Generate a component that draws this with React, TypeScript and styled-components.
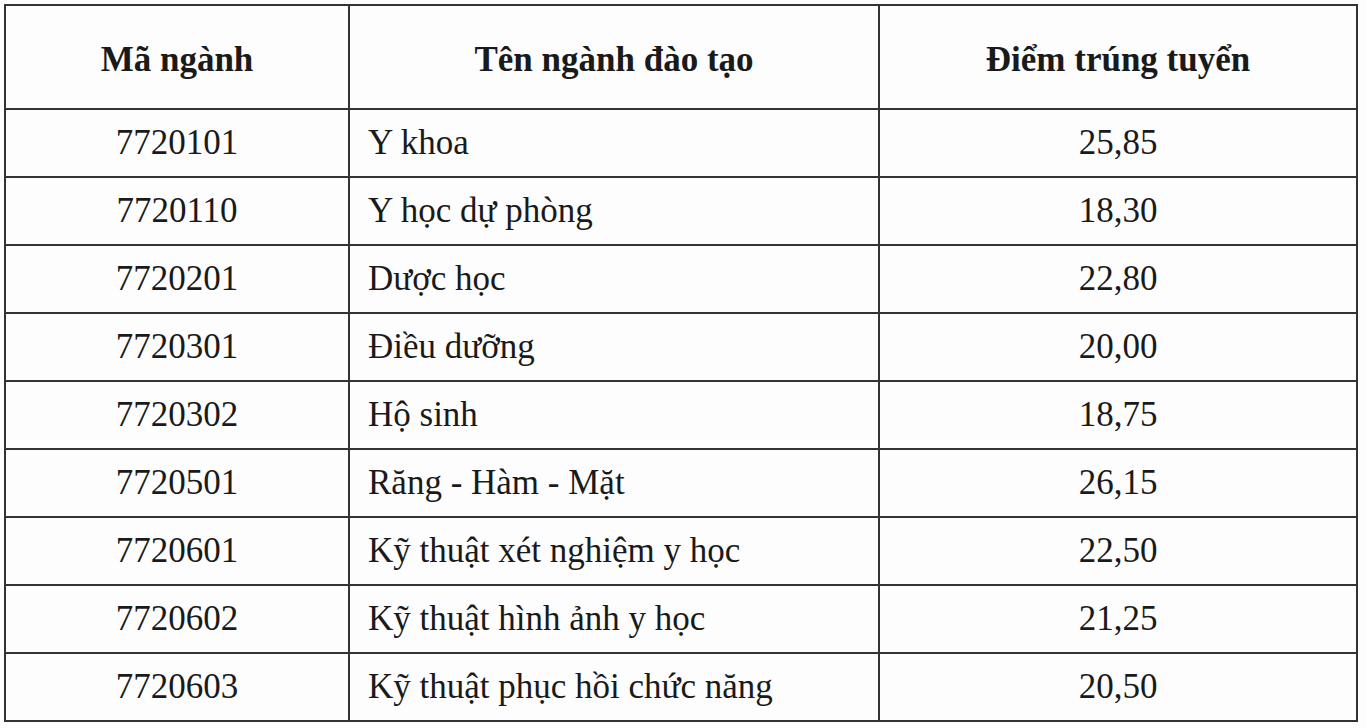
import React from 'react';
import styled, { createGlobalStyle } from 'styled-components';

interface Nganh {
  ma: string;
  ten: string;
  diem: string;
}

const rows: Nganh[] = [
  { ma: '7720101', ten: 'Y khoa', diem: '25,85' },
  { ma: '7720110', ten: 'Y học dự phòng', diem: '18,30' },
  { ma: '7720201', ten: 'Dược học', diem: '22,80' },
  { ma: '7720301', ten: 'Điều dưỡng', diem: '20,00' },
  { ma: '7720302', ten: 'Hộ sinh', diem: '18,75' },
  { ma: '7720501', ten: 'Răng - Hàm - Mặt', diem: '26,15' },
  { ma: '7720601', ten: 'Kỹ thuật xét nghiệm y học', diem: '22,50' },
  { ma: '7720602', ten: 'Kỹ thuật hình ảnh y học', diem: '21,25' },
  { ma: '7720603', ten: 'Kỹ thuật phục hồi chức năng', diem: '20,50' },
];

const GlobalStyle = createGlobalStyle`
  html, body {
    margin: 0;
    padding: 0;
    background: #fdfdfd;
  }
`;

const Page = styled.div`
  padding: 4px 10px 0 4px;
  font-family: "Liberation Serif", "Times New Roman", serif;
  color: #1a1a1a;
`;

const Table = styled.table`
  width: 1352px;
  border-collapse: collapse;
  table-layout: fixed;
  border: 2px solid #333;
`;

const Th = styled.th`
  height: 96px;
  padding: 6px 0 0;
  border: 2px solid #333;
  font-size: 35px;
  font-weight: bold;
  text-align: center;
  vertical-align: middle;
`;

const Td = styled.td<{ $align?: 'left' | 'center' }>`
  height: 66px;
  padding: 0 0 0 ${(p) => (p.$align === 'left' ? '18px' : '0')};
  border: 2px solid #333;
  font-size: 35px;
  text-align: ${(p) => p.$align ?? 'center'};
  vertical-align: middle;
`;

export default function App() {
  return (
    <Page>
      <GlobalStyle />
      <Table>
        <colgroup>
          <col style={{ width: 344 }} />
          <col style={{ width: 530 }} />
          <col style={{ width: 478 }} />
        </colgroup>
        <thead>
          <tr>
            <Th>Mã ngành</Th>
            <Th>Tên ngành đào tạo</Th>
            <Th>Điểm trúng tuyển</Th>
          </tr>
        </thead>
        <tbody>
          {rows.map((r) => (
            <tr key={r.ma}>
              <Td>{r.ma}</Td>
              <Td $align="left">{r.ten}</Td>
              <Td>{r.diem}</Td>
            </tr>
          ))}
        </tbody>
      </Table>
    </Page>
  );
}
